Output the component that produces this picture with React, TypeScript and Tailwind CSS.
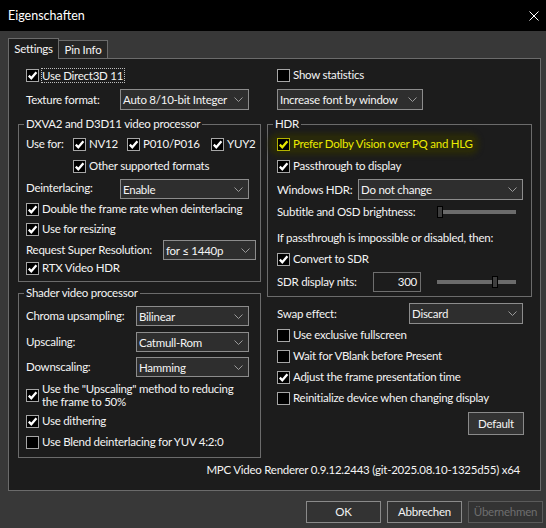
import React from 'react';

const Check = ({ checked = false, yellow = false }: { checked?: boolean; yellow?: boolean }) => (
  <span
    className={`flex h-[13px] w-[13px] shrink-0 items-center justify-center border bg-black ${
      yellow ? 'border-[#b4b400]' : 'border-[#a6a6a6]'
    }`}
  >
    {checked && (
      <svg viewBox="0 0 11 11" className="h-[11px] w-[11px]">
        <path d="M1.8 5.6 L4.3 8.2 L9.4 2.3" fill="none" stroke={yellow ? '#e8e800' : '#ffffff'} strokeWidth="2.3" />
      </svg>
    )}
  </span>
);

const CheckRow = ({
  label,
  checked = false,
  className = '',
}: {
  label: string;
  checked?: boolean;
  className?: string;
}) => (
  <div className={`flex h-[16px] items-center gap-[3px] whitespace-nowrap ${className}`}>
    <Check checked={checked} />
    <span>{label}</span>
  </div>
);

const Chevron = () => (
  <svg viewBox="0 0 9 5" className="h-[5px] w-[9px] shrink-0">
    <path d="M0.5 0.5 L4.5 4.5 L8.5 0.5" fill="none" stroke="#9a9a9a" strokeWidth="1" />
  </svg>
);

const Select = ({ value, className = '' }: { value: string; className?: string }) => (
  <div
    className={`flex shrink-0 items-center justify-between border border-[#8c8c8c] bg-[#2e2e2e] pl-[2px] pr-[5px] whitespace-nowrap ${className}`}
  >
    <span className="mt-[1px]">{value}</span>
    <Chevron />
  </div>
);

const Slider = ({ pos }: { pos: number }) => (
  <div className="relative flex h-[12px] w-[79px] shrink-0 items-center">
    <div className="h-[4px] w-full bg-[#6b6b6b]" />
    <div className="absolute top-0 h-[12px] w-[6px] border border-black bg-[#3e3e3e]" style={{ left: pos }} />
  </div>
);

const Group = ({ title, className = '', children }: { title: string; className?: string; children: React.ReactNode }) => (
  <div className={`flex flex-col border border-[#6b6b6b] ${className}`}>
    <span className="-mt-[9px] ml-[5px] h-[16px] w-fit bg-[#1c1c1c] px-[2px] whitespace-nowrap">{title}</span>
    {children}
  </div>
);

const Button = ({ label, disabled = false, className = '' }: { label: string; disabled?: boolean; className?: string }) => (
  <div
    className={`flex items-center justify-center border bg-[#333333] ${
      disabled ? 'border-[#5a5a5a] text-[#6e6e6e]' : 'border-[#8a8a8a]'
    } ${className}`}
  >
    {label}
  </div>
);

export default function App() {
  return (
    <div className="flex h-[528px] w-[546px] flex-col overflow-hidden bg-[#383838] font-['Lato','Liberation_Sans',sans-serif] text-[11.5px] leading-[16px] tracking-[-0.25px] text-[#f4f4f4]">
      {/* title bar */}
      <div className="flex h-[31px] shrink-0 items-center justify-between bg-black pl-[8px] pr-[7px]">
        <span className="text-[12.5px] tracking-[0px] text-white">Eigenschaften</span>
        <svg viewBox="0 0 10 10" className="h-[10px] w-[10px]">
          <path d="M0.5 0.5 L9.5 9.5 M9.5 0.5 L0.5 9.5" stroke="#ffffff" strokeWidth="1" />
        </svg>
      </div>

      {/* tabs */}
      <div className="flex h-[27px] shrink-0 items-end pl-[8px]">
        <div className="relative z-10 -mb-[1px] flex h-[21px] w-[51px] items-center justify-center border border-b-0 border-[#6b6b6b] bg-[#1c1c1c]">
          Settings
        </div>
        <div className="flex h-[18px] w-[49px] items-center justify-center border border-b-0 border-l-0 border-[#6b6b6b] bg-[#262626]">
          Pin Info
        </div>
      </div>

      {/* panel */}
      <div className="ml-[8px] flex h-[433px] w-[533px] shrink-0 flex-col border border-[#6b6b6b] bg-[#1c1c1c]">
        <div className="flex gap-[6px] pl-[9px]">
          {/* left column */}
          <div className="flex w-[243px] flex-col pt-[8px]">
            <div className="flex h-[16px] items-center gap-[2px] pl-[8px] whitespace-nowrap">
              <Check checked />
              <span className="border border-dotted border-[#bdbdbd] pr-[1px] leading-[13px]">Use Direct3D 11</span>
            </div>
            <div className="mt-[6px] flex h-[21px] items-center">
              <span className="w-[102px] shrink-0 pl-[8px] whitespace-nowrap">Texture format:</span>
              <Select value="Auto 8/10-bit Integer" className="h-[21px] w-[129px]" />
            </div>

            <Group title="DXVA2 and D3D11 video processor" className="mt-[14px] pb-[5px]">
              <div className="mt-[4px] flex h-[16px] items-center">
                <span className="w-[54px] shrink-0 pl-[7px] whitespace-nowrap">Use for:</span>
                <CheckRow label="NV12" checked className="w-[54px]" />
                <CheckRow label="P010/P016" checked className="w-[84px]" />
                <CheckRow label="YUY2" checked />
              </div>
              <CheckRow label="Other supported formats" checked className="mt-[6px] pl-[54px]" />
              <div className="mt-[5px] flex h-[20px] items-center">
                <span className="-mt-[3px] w-[101px] shrink-0 pl-[7px] whitespace-nowrap">Deinterlacing:</span>
                <Select value="Enable" className="h-[20px] w-[129px]" />
              </div>
              <CheckRow label="Double the frame rate when deinterlacing" checked className="mt-[2px] pl-[7px]" />
              <CheckRow label="Use for resizing" checked className="mt-[4px] pl-[7px]" />
              <div className="mt-[3px] flex h-[20px] items-center">
                <span className="w-[144px] shrink-0 pl-[7px] whitespace-nowrap">Request Super Resolution:</span>
                <Select value="for ≤ 1440p" className="h-[20px] w-[93px]" />
              </div>
              <CheckRow label="RTX Video HDR" checked className="pl-[7px]" />
            </Group>

            <Group title="Shader video processor" className="mt-[11px] pb-[7px]">
              <div className="mt-[5px] flex h-[20px] items-center">
                <span className="w-[117px] shrink-0 pl-[7px] whitespace-nowrap">Chroma upsampling:</span>
                <Select value="Bilinear" className="h-[20px] w-[113px]" />
              </div>
              <div className="mt-[6px] flex h-[20px] items-center">
                <span className="w-[117px] shrink-0 pl-[7px]">Upscaling:</span>
                <Select value="Catmull-Rom" className="h-[20px] w-[113px]" />
              </div>
              <div className="mt-[5px] flex h-[20px] items-center">
                <span className="w-[117px] shrink-0 pl-[7px]">Downscaling:</span>
                <Select value="Hamming" className="h-[20px] w-[113px]" />
              </div>
              <div className="mt-[5px] flex items-center gap-[3px] pl-[7px] leading-[13px]">
                <Check checked />
                <span className="whitespace-nowrap">
                  Use the "Upscaling" method to reducing
                  <br />
                  the frame to 50%
                </span>
              </div>
              <CheckRow label="Use dithering" checked className="mt-[5px] pl-[7px]" />
              <CheckRow label="Use Blend deinterlacing for YUV 4:2:0" className="mt-[5px] pl-[7px]" />
            </Group>
          </div>

          {/* right column */}
          <div className="flex w-[265px] flex-col pt-[8px]">
            <CheckRow label="Show statistics" className="pl-[10px]" />
            <Select value="Increase font by window" className="ml-[10px] mt-[6px] h-[21px] w-[146px]" />

            <Group title="HDR" className="mt-[14px] pb-[4px]">
              <div className="ml-[4px] mt-[4px] flex h-[16px] w-[204px] items-center gap-[3px] rounded-[6px] bg-[#29290a] pl-[5px] whitespace-nowrap text-[#ecec00] shadow-[0_0_5px_3px_#29290a]">
                <Check checked yellow />
                <span>Prefer Dolby Vision over PQ and HLG</span>
              </div>
              <CheckRow label="Passthrough to display" checked className="mt-[6px] pl-[9px]" />
              <div className="mt-[5px] flex h-[21px] items-center">
                <span className="w-[90px] shrink-0 pl-[9px] whitespace-nowrap">Windows HDR:</span>
                <Select value="Do not change" className="h-[21px] w-[165px]" />
              </div>
              <div className="mt-[4px] flex h-[16px] items-center">
                <span className="w-[169px] shrink-0 pl-[9px] whitespace-nowrap">Subtitle and OSD brightness:</span>
                <Slider pos={0} />
              </div>
              <div className="mt-[10px] h-[16px] pl-[9px] whitespace-nowrap">If passthrough is impossible or disabled, then:</div>
              <CheckRow label="Convert to SDR" checked className="mt-[5px] pl-[9px]" />
              <div className="mt-[5px] flex h-[20px] items-center">
                <span className="w-[105px] shrink-0 pl-[9px] whitespace-nowrap">SDR display nits:</span>
                <div className="flex h-[20px] w-[48px] shrink-0 items-center justify-end border border-[#6e6e6e] pr-[3px]">300</div>
                <div className="ml-[16px]">
                  <Slider pos={55} />
                </div>
              </div>
            </Group>

            <div className="mt-[6px] flex h-[21px] items-center">
              <span className="w-[142px] shrink-0 pl-[10px] whitespace-nowrap">Swap effect:</span>
              <Select value="Discard" className="h-[21px] w-[114px]" />
            </div>
            <CheckRow label="Use exclusive fullscreen" className="mt-[3px] pl-[10px]" />
            <CheckRow label="Wait for VBlank before Present" className="mt-[5px] pl-[10px]" />
            <CheckRow label="Adjust the frame presentation time" checked className="mt-[5px] pl-[10px]" />
            <CheckRow label="Reinitialize device when changing display" className="mt-[5px] pl-[10px]" />
            <Button label="Default" className="mr-[8px] mt-[6px] h-[23px] w-[56px] self-end" />
          </div>
        </div>

        <div className="mt-[4px] h-[16px] pr-[20px] text-right whitespace-nowrap">
          MPC Video Renderer 0.9.12.2443 (git-2025.08.10-1325d55) x64
        </div>
      </div>

      {/* dialog buttons */}
      <div className="mt-[10px] flex justify-end gap-[6px] pr-[3px]">
        <Button label="OK" className="h-[22px] w-[75px]" />
        <Button label="Abbrechen" className="h-[22px] w-[75px]" />
        <Button label="Übernehmen" disabled className="h-[22px] w-[75px]" />
      </div>
    </div>
  );
}
